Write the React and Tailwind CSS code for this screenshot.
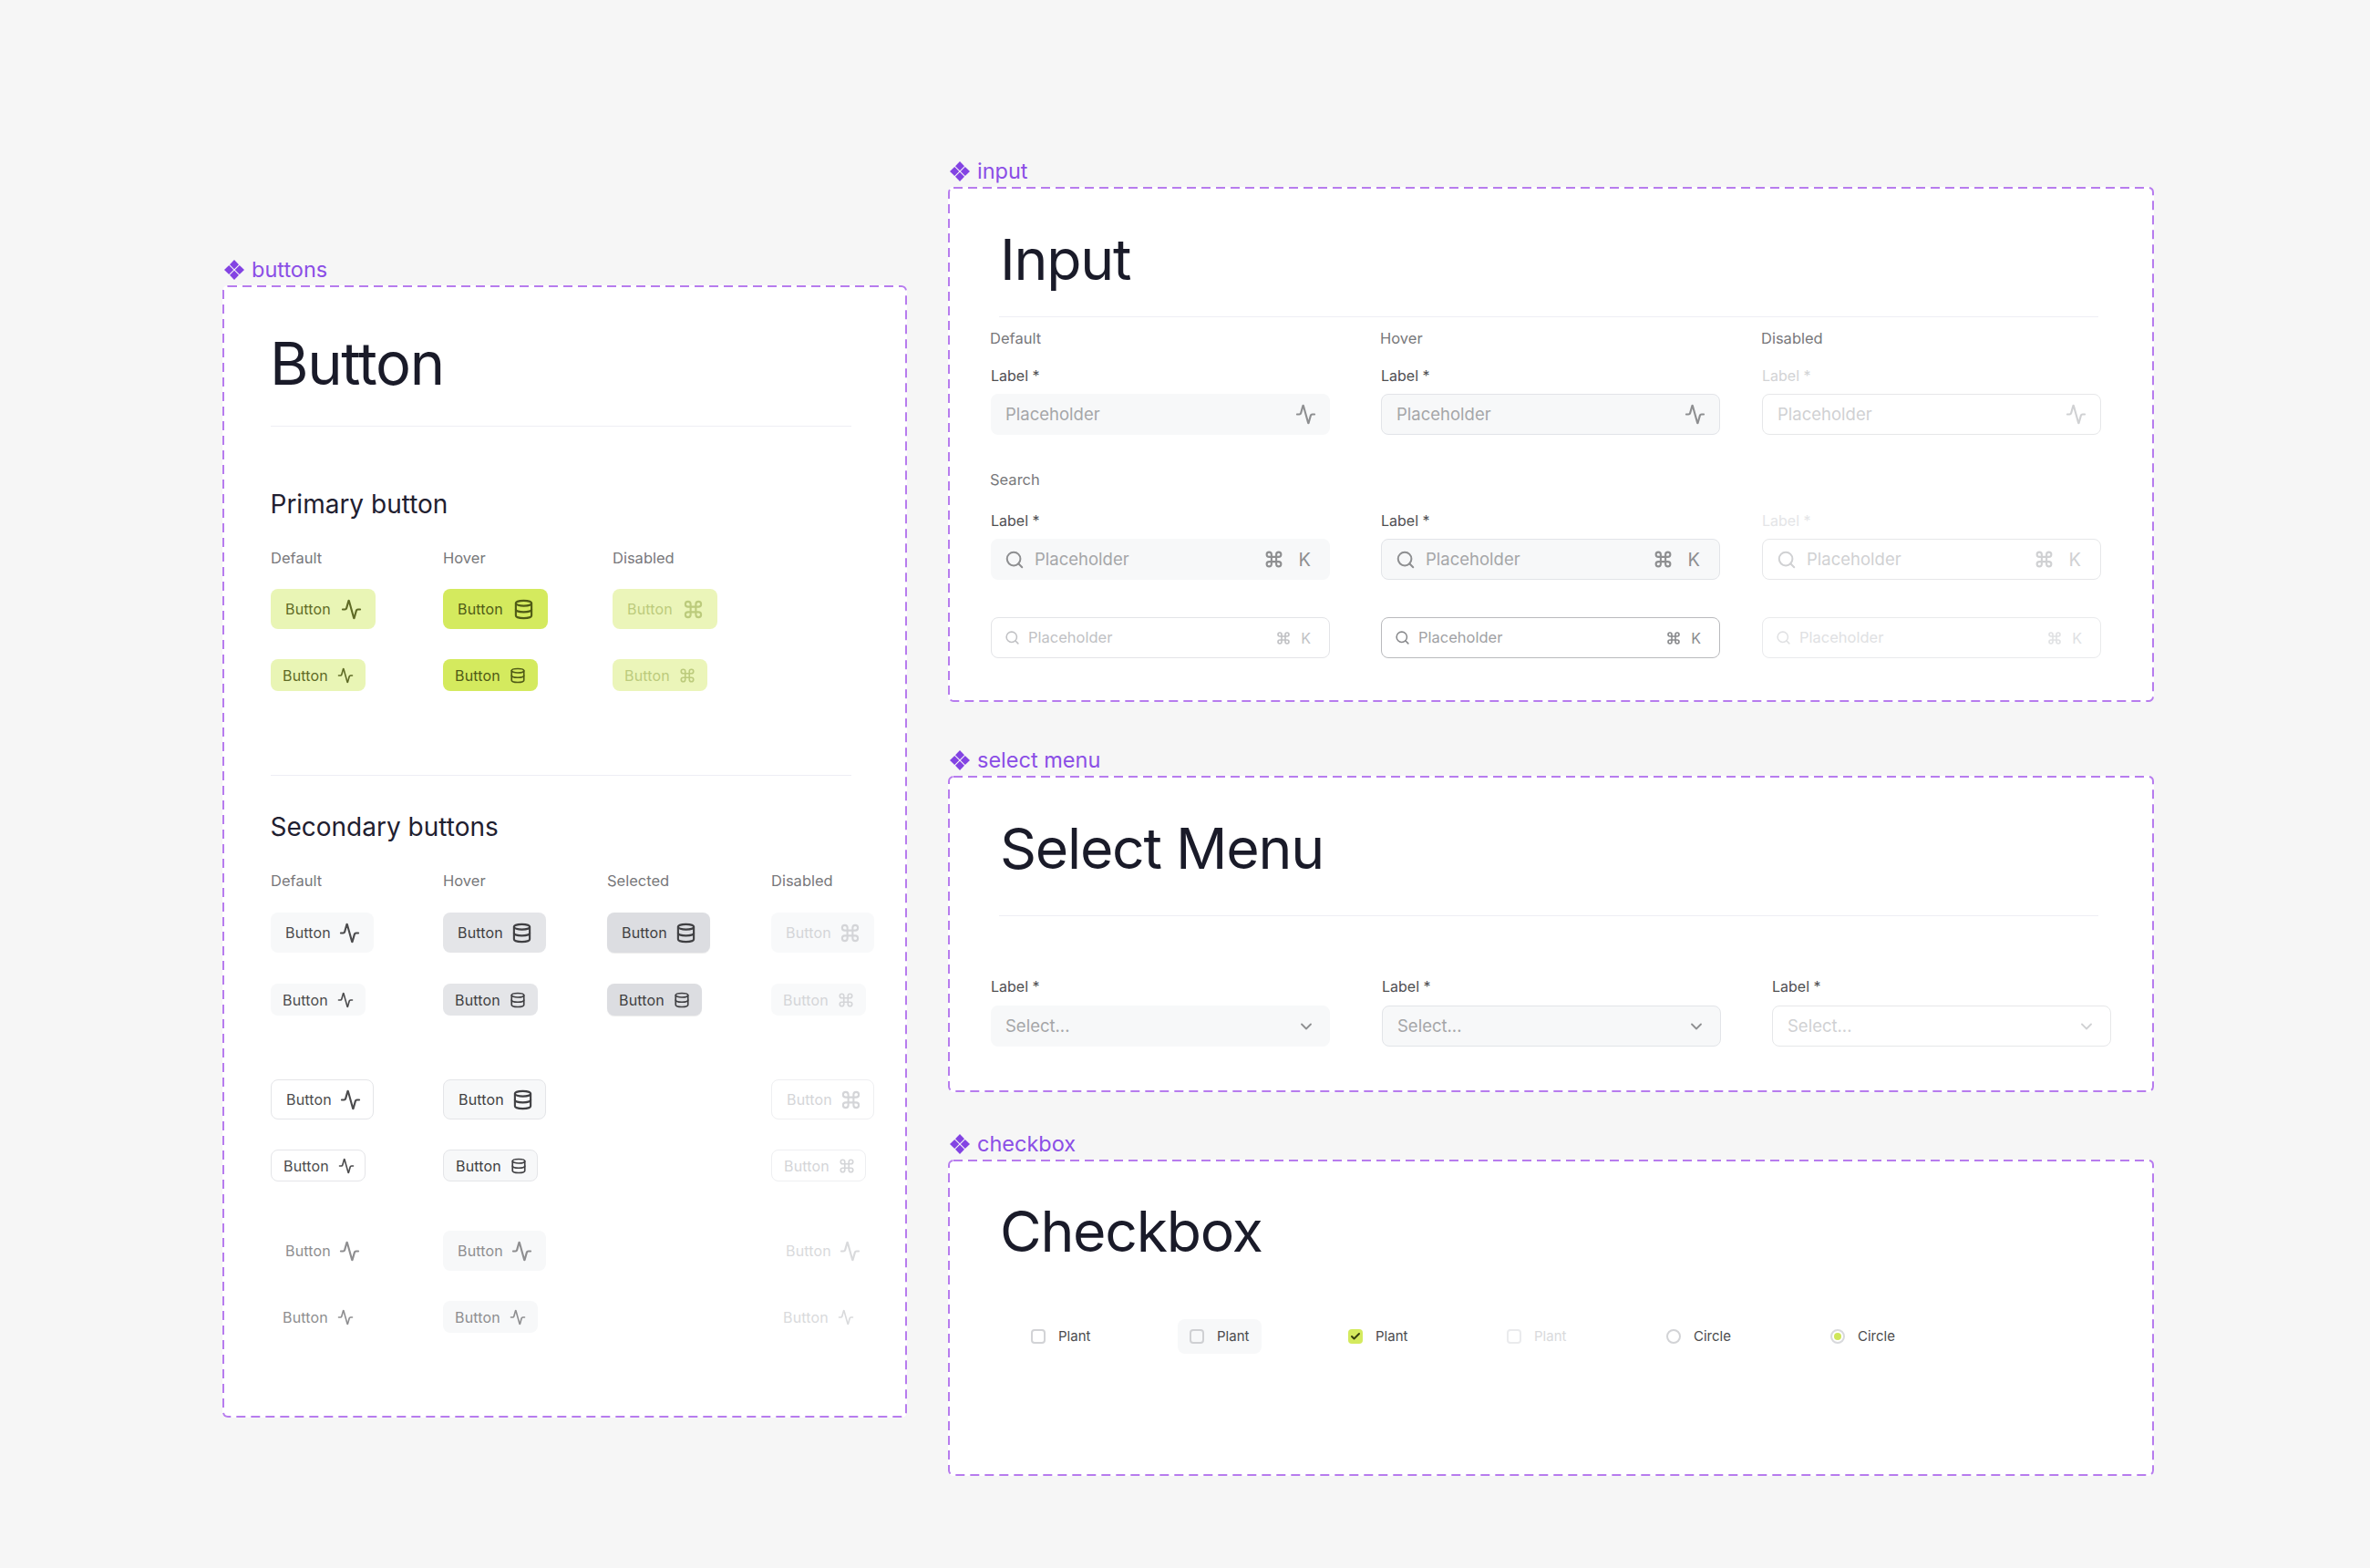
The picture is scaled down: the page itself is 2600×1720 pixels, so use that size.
import React from "react";
import { Activity, Check, ChevronDown, Command, Database, Search } from "lucide-react";

const btnVariants = {
  primary: "bg-[#e9f5b5] text-[#5f6b26]",
  primaryHover: "bg-[#d4ea5e] text-[#4f5a16]",
  primaryDisabled: "bg-[#ebf5b9] text-[#bccb7c]",
  secondary: "bg-[#f7f8f9] text-[#4b4b4d]",
  secondaryHover: "bg-[#e4e5e8] text-[#3f3f42]",
  selected: "bg-[#dcdde1] text-[#3f3f42] shadow-[0_1px_1px_rgba(0,0,0,0.08)]",
  secondaryDisabled: "bg-[#f8f9fa] text-[#d4d5d8]",
  outline: "bg-white border border-[#e4e5e8] text-[#4b4b4d]",
  outlineHover: "bg-[#f7f8f9] border border-[#e4e5e8] text-[#3f3f42]",
  outlineDisabled: "bg-white border border-[#eeeff1] text-[#d4d5d8]",
  ghost: "text-[#8e8e90]",
  ghostHover: "bg-[#f7f8f9] text-[#8e8e90]",
  ghostDisabled: "text-[#d9dadc]",
};

const iconMap = { activity: Activity, database: Database, command: Command };

const Btn = ({ variant, icon, small, wide }) => {
  const Icon = iconMap[icon];
  const sizing = small
    ? "h-[35px] w-[104px] gap-[10px] pl-[13px]"
    : wide
      ? "h-[44px] w-[115px] gap-[11px] pl-[16px]"
      : "h-[44px] w-[113px] gap-[9px] pl-[16px]";
  return (
    <div className={`inline-flex items-center rounded-lg text-base tracking-[0.01em] ${sizing} ${btnVariants[variant]}`}>
      <span>Button</span>
      <Icon size={small ? 18 : 23} strokeWidth={2.2} />
    </div>
  );
};

const DiamondTag = ({ name }) => (
  <div className="mb-[2px] flex h-[30px] items-center gap-[8px] pl-[2px] text-[23.5px] leading-[30px] text-[#8b4ee6]">
    <svg width="22" height="22" viewBox="0 0 22 22" fill="#8343e3">
      <path d="M11 0 16 5.2 11 10.2 6 5.2Z" />
      <path d="M11 11.8 16 16.8 11 22 6 16.8Z" />
      <path d="M5.2 6 10.2 11 5.2 16 0 11Z" />
      <path d="M16.8 6 22 11 16.8 16 11.8 11Z" />
    </svg>
    <span>{name}</span>
  </div>
);

const Frame = ({ className, children }) => (
  <div className={`relative rounded-[6px] bg-white ${className}`}>
    <svg className="pointer-events-none absolute inset-0 h-full w-full">
      <rect
        x="1"
        y="1"
        rx="5"
        className="[height:calc(100%-2px)] [width:calc(100%-2px)]"
        fill="none"
        stroke="#b77cee"
        strokeWidth="2"
        strokeDasharray="10 6"
      />
    </svg>
    {children}
  </div>
);

const Title = ({ children, className = "" }) => (
  <h1 className={`h-[80px] leading-[80px] tracking-[-0.02em] font-[375] text-[#1a1b29] ${className}`}>
    {children}
  </h1>
);

const StateHead = ({ children, className = "" }) => (
  <div className={`h-[24px] text-[16.5px] leading-[24px] text-[#78787b] ${className}`}>{children}</div>
);

const fieldVariants = {
  default: { box: "bg-[#f7f8f9]", text: "text-[#a5a6a8]", icon: "text-[#8e8f91]" },
  hover: { box: "bg-[#f7f8f9] border border-[#e2e4e8]", text: "text-[#a5a6a8]", icon: "text-[#8e8f91]" },
  disabled: { box: "bg-white border border-[#e6e7e9]", text: "text-[#d0d1d3]", icon: "text-[#d0d1d3]" },
  plain: { box: "bg-white border border-[#e3e4e7]", text: "text-[#c0c1c4]", icon: "text-[#c0c1c4]" },
  focus: { box: "bg-white border border-[#b9babd]", text: "text-[#a0a1a4]", icon: "text-[#88898c]" },
  plainDisabled: { box: "bg-white border border-[#e9eaec]", text: "text-[#e0e1e3]", icon: "text-[#e0e1e3]" },
};

const FieldLabel = ({ tone = "text-[#4f4f52]" }) => (
  <div className={`h-[22px] text-[16px] leading-[22px] ${tone}`}>Label *</div>
);

const IconField = ({ variant }) => {
  const v = fieldVariants[variant];
  return (
    <div className={`flex h-[45px] w-[372px] items-center justify-between rounded-lg pl-[16px] pr-[15px] text-[18.5px] ${v.box} ${v.text}`}>
      <span>Placeholder</span>
      <Activity size={23} strokeWidth={2.2} className={v.icon} />
    </div>
  );
};

const SearchField = ({ variant }) => {
  const v = fieldVariants[variant];
  return (
    <div className={`flex h-[45px] w-[372px] items-center rounded-lg pl-[15px] pr-[21px] text-[18.5px] ${v.box} ${v.text}`}>
      <Search size={22} strokeWidth={2.2} className={v.icon} />
      <span className="ml-[11px] flex-1">Placeholder</span>
      <Command size={21} strokeWidth={2.4} className={v.icon} />
      <span className={`ml-[17px] text-[20px] ${v.icon}`}>K</span>
    </div>
  );
};

const SearchFieldSmall = ({ variant }) => {
  const v = fieldVariants[variant];
  return (
    <div className={`flex h-[45px] w-[372px] items-center rounded-lg pl-[14px] pr-[20px] text-[16.5px] ${v.box} ${v.text}`}>
      <Search size={17} strokeWidth={2.2} className={v.icon} />
      <span className="ml-[9px] flex-1">Placeholder</span>
      <Command size={16} strokeWidth={2.4} className={v.icon} />
      <span className={`ml-[11px] text-[16px] ${v.icon}`}>K</span>
    </div>
  );
};

const SelectField = ({ variant }) => {
  const v = fieldVariants[variant];
  return (
    <div className={`flex h-[45px] w-[372px] items-center justify-between rounded-lg pl-[16px] pr-[16px] text-[18.5px] ${v.box} ${v.text}`}>
      <span>Select...</span>
      <ChevronDown size={20} strokeWidth={2.2} className={v.icon} />
    </div>
  );
};

const CheckItem = ({ box, text = "text-[#4b4b4d]", label, bg = "", className = "" }) => (
  <div className={`flex h-[38px] w-[92px] items-center gap-[14px] whitespace-nowrap rounded-lg pl-[13px] text-[15px] ${bg} ${text} ${className}`}>
    {box}
    <span>{label}</span>
  </div>
);

const emptyBox = "h-[16px] w-[16px] rounded-[4px] border-2";

const btnGrid = "grid grid-cols-[189px_180px_180px_114px]";
const primaryGrid = "grid grid-cols-[189px_186px_180px]";
const fieldGrid = "grid grid-cols-[428px_418px_372px]";
const selectGrid = "grid grid-cols-[429px_428px_372px]";

const BtnRow = ({ items, small, className = "" }) => (
  <div className={`${btnGrid} ${className}`}>
    {items.map((it, idx) =>
      it ? <Btn key={idx} variant={it[0]} icon={it[1]} small={small} /> : <div key={idx} />
    )}
  </div>
);

export default function App() {
  return (
    <div className="flex min-h-screen items-start gap-[45px] bg-[#f6f6f6] pl-[244px] font-[Inter,sans-serif]">
      <div className="w-[751px] pt-[281px]">
        <DiamondTag name="buttons" />
        <Frame className="h-[1242px] px-[53px] pt-[46px]">
          <Title className="-ml-[1px] text-[65px]">Button</Title>
          <div className="mt-[28px] h-px w-[637px] bg-[#eeeef4]" />

          <h2 className="-ml-[0.5px] mt-[65px] h-[40px] text-[28px] leading-[40px] text-[#1f2030]">Primary button</h2>
          <div className={`mt-[27px] ${primaryGrid}`}>
            <StateHead>Default</StateHead>
            <StateHead>Hover</StateHead>
            <StateHead>Disabled</StateHead>
          </div>
          <div className={`mt-[22px] ${primaryGrid}`}>
            <Btn wide variant="primary" icon="activity" />
            <Btn wide variant="primaryHover" icon="database" />
            <Btn wide variant="primaryDisabled" icon="command" />
          </div>
          <div className={`mt-[33px] ${primaryGrid}`}>
            <Btn small variant="primary" icon="activity" />
            <Btn small variant="primaryHover" icon="database" />
            <Btn small variant="primaryDisabled" icon="command" />
          </div>

          <div className="mt-[92px] h-px w-[637px] bg-[#eeeef4]" />
          <h2 className="-ml-[0.5px] mt-[36px] h-[40px] text-[28px] leading-[40px] text-[#1f2030]">Secondary buttons</h2>
          <div className={`mt-[27px] ${btnGrid}`}>
            <StateHead>Default</StateHead>
            <StateHead>Hover</StateHead>
            <StateHead>Selected</StateHead>
            <StateHead>Disabled</StateHead>
          </div>
          <BtnRow className="mt-[23px]" items={[["secondary", "activity"], ["secondaryHover", "database"], ["selected", "database"], ["secondaryDisabled", "command"]]} />
          <BtnRow small className="mt-[34px]" items={[["secondary", "activity"], ["secondaryHover", "database"], ["selected", "database"], ["secondaryDisabled", "command"]]} />
          <BtnRow className="mt-[70px]" items={[["outline", "activity"], ["outlineHover", "database"], null, ["outlineDisabled", "command"]]} />
          <BtnRow small className="mt-[33px]" items={[["outline", "activity"], ["outlineHover", "database"], null, ["outlineDisabled", "command"]]} />
          <BtnRow className="mt-[54px]" items={[["ghost", "activity"], ["ghostHover", "activity"], null, ["ghostDisabled", "activity"]]} />
          <BtnRow small className="mt-[33px]" items={[["ghost", "activity"], ["ghostHover", "activity"], null, ["ghostDisabled", "activity"]]} />
        </Frame>
      </div>

      <div className="w-[1323px] pt-[173px]">
        <DiamondTag name="input" />
        <Frame className="h-[565px] pl-[47px] pt-[39px]">
          <Title className="pl-[10px] text-[62.5px]">Input</Title>
          <div className="ml-[9px] mt-[23px] h-px w-[1206px] bg-[#eeeef4]" />
          <div className={`-ml-[1px] mt-[11px] ${fieldGrid}`}>
            <StateHead>Default</StateHead>
            <StateHead>Hover</StateHead>
            <StateHead>Disabled</StateHead>
          </div>
          <div className={`mt-[18px] ${fieldGrid}`}>
            <FieldLabel />
            <FieldLabel />
            <FieldLabel tone="text-[#d2d3d5]" />
          </div>
          <div className={`mt-[9px] ${fieldGrid}`}>
            <IconField variant="default" />
            <IconField variant="hover" />
            <IconField variant="disabled" />
          </div>
          <StateHead className="-ml-[1px] mt-[37px]">Search</StateHead>
          <div className={`mt-[22px] ${fieldGrid}`}>
            <FieldLabel />
            <FieldLabel />
            <FieldLabel tone="text-[#e4e5e7]" />
          </div>
          <div className={`mt-[9px] ${fieldGrid}`}>
            <SearchField variant="default" />
            <SearchField variant="hover" />
            <SearchField variant="disabled" />
          </div>
          <div className={`mt-[41px] ${fieldGrid}`}>
            <SearchFieldSmall variant="plain" />
            <SearchFieldSmall variant="focus" />
            <SearchFieldSmall variant="plainDisabled" />
          </div>
        </Frame>

        <div className="mt-[49px]">
          <DiamondTag name="select menu" />
          <Frame className="h-[347px] pl-[47px] pt-[39px]">
            <Title className="pl-[10px] text-[62.5px]">Select Menu</Title>
            <div className="ml-[9px] mt-[34px] h-px w-[1206px] bg-[#eeeef4]" />
            <div className={`mt-[66px] ${selectGrid}`}>
              <FieldLabel />
              <FieldLabel />
              <FieldLabel />
            </div>
            <div className={`mt-[10px] ${selectGrid}`}>
              <SelectField variant="default" />
              <SelectField variant="hover" />
              <SelectField variant="disabled" />
            </div>
          </Frame>
        </div>

        <div className="mt-[42px]">
          <DiamondTag name="checkbox" />
          <Frame className="h-[347px] pl-[57px] pt-[38px]">
            <Title className="text-[62.5px]">Checkbox</Title>
            <div className="ml-[21px] mt-[57px] flex gap-[82px]">
              <CheckItem label="Plant" box={<span className={`${emptyBox} border-[#d2d3d6]`} />} />
              <CheckItem label="Plant" bg="bg-[#f7f8f9]" box={<span className={`${emptyBox} border-[#cfd0d3]`} />} />
              <CheckItem
                label="Plant"
                box={
                  <span className="flex h-[16px] w-[16px] items-center justify-center rounded-[4px] bg-[#d4ea5e]">
                    <Check size={12} strokeWidth={4} className="text-[#38410f]" />
                  </span>
                }
              />
              <CheckItem label="Plant" text="text-[#d9dadc]" box={<span className={`${emptyBox} border-[#eaebed]`} />} />
              <CheckItem className="ml-[1px]" label="Circle" box={<span className="h-[16px] w-[16px] rounded-full border-2 border-[#d2d3d6]" />} />
              <CheckItem
                className="ml-[6px]"
                label="Circle"
                box={
                  <span className="flex h-[16px] w-[16px] items-center justify-center rounded-full border-2 border-[#d8d9dc]">
                    <span className="h-[8px] w-[8px] rounded-full bg-[#cfe65a]" />
                  </span>
                }
              />
            </div>
          </Frame>
        </div>
      </div>
    </div>
  );
}
